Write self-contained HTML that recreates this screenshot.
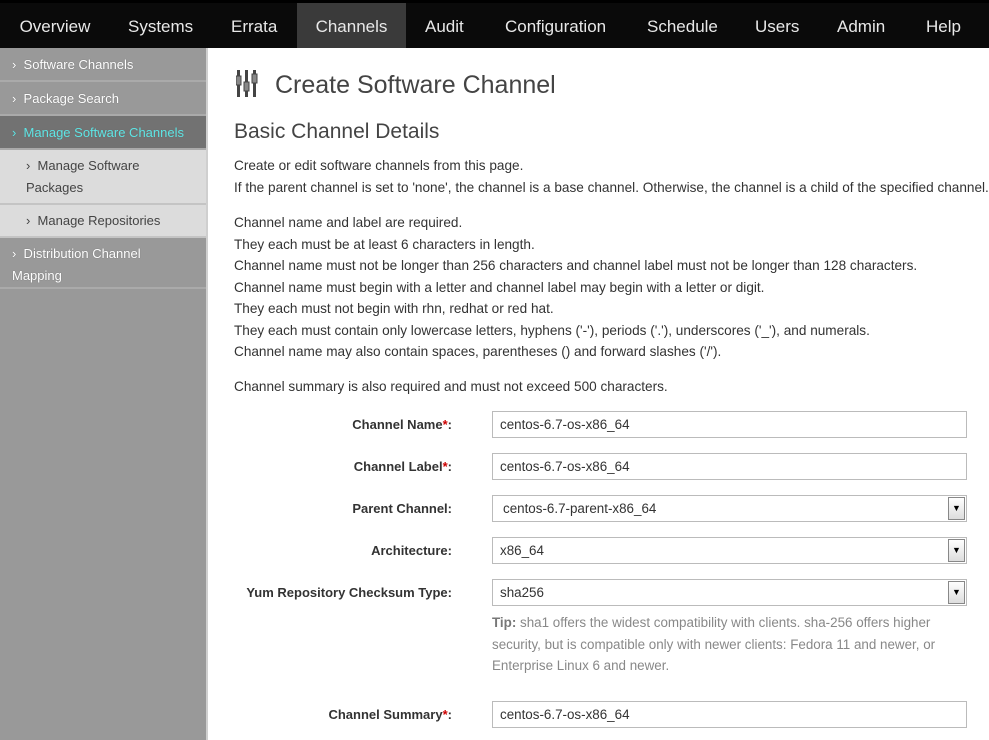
<!DOCTYPE html>
<html><head><meta charset="utf-8"><style>
*{box-sizing:border-box;margin:0;padding:0}
body{width:989px;height:740px;overflow:hidden;font-family:"Liberation Sans",sans-serif;background:#fff;color:#333;position:relative}
.top{position:absolute;left:0;top:0;width:989px;height:48px;background:#0a0a0a;border-top:3px solid #000}
.top span{position:absolute;top:0;height:45px;line-height:47px;font-size:17px;color:#e8e8e8}
.top .act{background:#3a3a3a}
.side{position:absolute;left:0;top:48px;width:208px;height:692px;background:#999;border-right:2px solid #cfcfcf}
.side div{font-size:13px;color:#fff;border-bottom:2px solid #aaa;padding-left:12px;text-shadow:0 0 1px #666}
.side .a{background:#727272;color:#5ee5e5}
.side .s{background:#dcdcdc;color:#444;text-shadow:none;padding-left:26px;border-bottom:2px solid #c4c4c4}
.main{position:absolute;left:234px;top:0}
p{font-size:13.6px;line-height:21.5px;white-space:nowrap;color:#333}
.lbl{position:absolute;right:537px;font-size:13px;font-weight:bold;color:#333;white-space:nowrap}
.lbl b{color:#c00}
.in{position:absolute;left:492px;width:475px;height:27px;border:1px solid #bbb;font-size:13.4px;line-height:25px;padding-left:7px;color:#333}
.dd{position:absolute;right:1px;top:1px;width:17px;height:23px;border:1px solid #888;background:linear-gradient(#fff,#ddd);font-size:9px;line-height:21px;text-align:center;color:#000}
</style></head><body>
<div class="top">
<span style="left:0;width:110px;text-align:center;padding-left:0">Overview</span>
<span style="left:128px">Systems</span>
<span style="left:231px">Errata</span>
<span class="act" style="left:297px;width:109px;text-align:center">Channels</span>
<span style="left:425px">Audit</span>
<span style="left:505px">Configuration</span>
<span style="left:647px">Schedule</span>
<span style="left:755px">Users</span>
<span style="left:837px">Admin</span>
<span style="left:926px">Help</span>
</div>
<div class="side">
<div style="height:34px;line-height:33px">›&nbsp; Software Channels</div>
<div style="height:34px;line-height:33px">›&nbsp; Package Search</div>
<div class="a" style="height:34px;line-height:33px">›&nbsp; Manage Software Channels</div>
<div class="s" style="height:55px;line-height:22px;padding-top:5px">›&nbsp; Manage Software<br>Packages</div>
<div class="s" style="height:33px;line-height:32px">›&nbsp; Manage Repositories</div>
<div style="height:51px;line-height:22px;padding-top:5px">›&nbsp; Distribution Channel<br>Mapping</div>
</div>
<svg style="position:absolute;left:236px;top:70px" width="22" height="28" viewBox="0 0 22 28">
<g fill="#444"><rect x="1" y="0" width="3" height="27"/><rect x="9" y="0" width="3" height="27"/><rect x="17" y="0" width="3" height="27"/></g>
<g fill="#888" stroke="#444" stroke-width="1"><rect x="0" y="6" width="5" height="9"/><rect x="8" y="12" width="5" height="9"/><rect x="16" y="4" width="5" height="9"/></g>
</svg>
<div style="position:absolute;left:275px;top:71px;font-size:25px;color:#444">Create Software Channel</div>
<div style="position:absolute;left:234px;top:120px;font-size:21px;color:#444">Basic Channel Details</div>
<div class="main" style="top:155px">
<p>Create or edit software channels from this page.</p>
<p>If the parent channel is set to 'none', the channel is a base channel. Otherwise, the channel is a child of the specified channel.</p>
</div>
<div class="main" style="top:212px">
<p>Channel name and label are required.</p>
<p>They each must be at least 6 characters in length.</p>
<p>Channel name must not be longer than 256 characters and channel label must not be longer than 128 characters.</p>
<p>Channel name must begin with a letter and channel label may begin with a letter or digit.</p>
<p>They each must not begin with rhn, redhat or red hat.</p>
<p>They each must contain only lowercase letters, hyphens ('-'), periods ('.'), underscores ('_'), and numerals.</p>
<p>Channel name may also contain spaces, parentheses () and forward slashes ('/').</p>
</div>
<div class="main" style="top:376px"><p>Channel summary is also required and must not exceed 500 characters.</p></div>

<div class="lbl" style="top:417px">Channel Name<b>*</b>:</div>
<div class="in" style="top:411px">centos-6.7-os-x86_64</div>
<div class="lbl" style="top:459px">Channel Label<b>*</b>:</div>
<div class="in" style="top:453px">centos-6.7-os-x86_64</div>
<div class="lbl" style="top:501px">Parent Channel:</div>
<div class="in" style="top:495px;padding-left:10px">centos-6.7-parent-x86_64<div class="dd">▼</div></div>
<div class="lbl" style="top:543px">Architecture:</div>
<div class="in" style="top:537px">x86_64<div class="dd">▼</div></div>
<div class="lbl" style="top:585px">Yum Repository Checksum Type:</div>
<div class="in" style="top:579px">sha256<div class="dd">▼</div></div>
<div style="position:absolute;left:492px;top:612px;font-size:13.4px;line-height:21.5px;color:#888;width:475px"><b style="color:#777">Tip:</b> sha1 offers the widest compatibility with clients. sha-256 offers higher security, but is compatible only with newer clients: Fedora 11 and newer, or Enterprise Linux 6 and newer.</div>
<div class="lbl" style="top:707px">Channel Summary<b>*</b>:</div>
<div class="in" style="top:701px">centos-6.7-os-x86_64</div>
</body></html>
